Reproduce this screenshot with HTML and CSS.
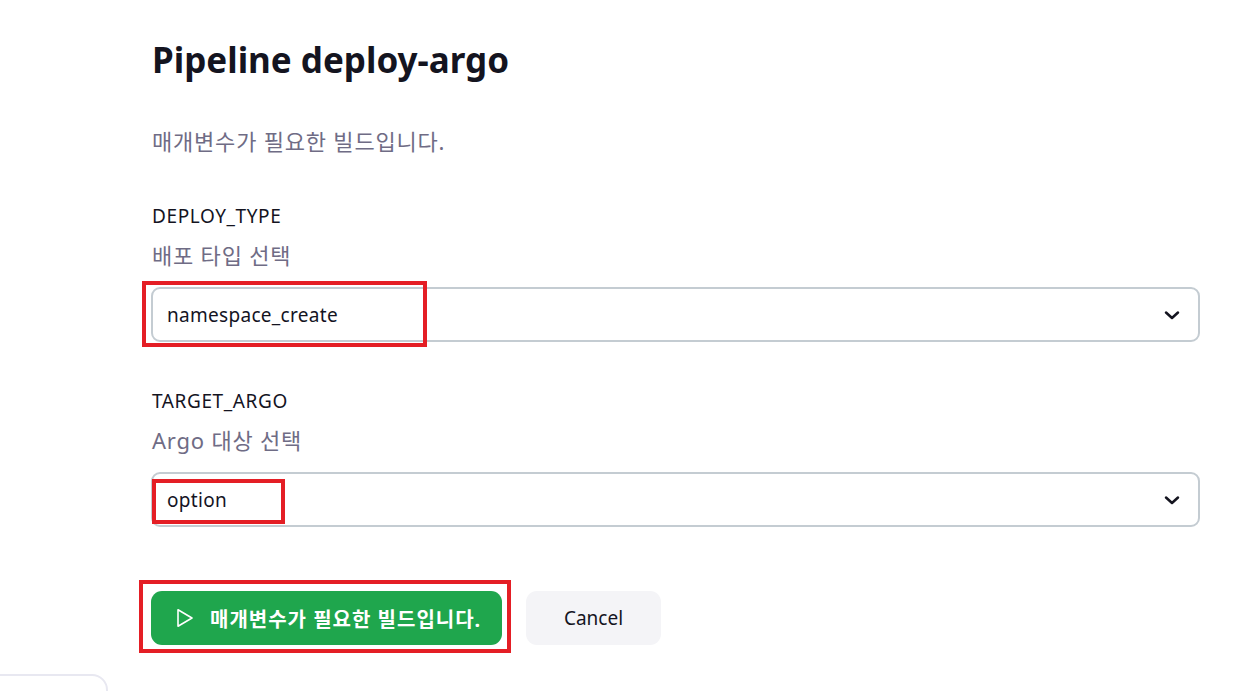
FILE: index.html
```html
<!DOCTYPE html>
<html lang="ko">
<head>
<meta charset="utf-8">
<title>Pipeline deploy-argo</title>
<link rel="stylesheet" href="styles.css">
</head>
<body>
<main class="main">
  <h1 class="title">Pipeline deploy-argo</h1>
  <p class="subtitle">매개변수가 필요한 빌드입니다.</p>

  <div class="param param-first">
    <div class="param-name">DEPLOY_TYPE</div>
    <div class="param-desc">배포 타입 선택</div>
    <div class="select-wrap">
      <div class="select">
        <span class="select-value">namespace_create</span>
        <svg class="chevron" width="20" height="20" viewBox="0 0 20 20"><path d="M4 7.5 L10 13 L16 7.5" fill="none" stroke="#14141f" stroke-width="2.5" stroke-linecap="round" stroke-linejoin="round"/></svg>
      </div>
      <div class="mark mark-1"></div>
    </div>
  </div>

  <div class="param">
    <div class="param-name">TARGET_ARGO</div>
    <div class="param-desc">Argo 대상 선택</div>
    <div class="select-wrap">
      <div class="select">
        <span class="select-value">option</span>
        <svg class="chevron" width="20" height="20" viewBox="0 0 20 20"><path d="M4 7.5 L10 13 L16 7.5" fill="none" stroke="#14141f" stroke-width="2.5" stroke-linecap="round" stroke-linejoin="round"/></svg>
      </div>
      <div class="mark mark-2"></div>
    </div>
  </div>

  <div class="actions">
    <div class="build-wrap">
      <button class="btn btn-build" type="button">
        <svg class="play" width="18" height="20" viewBox="0 0 18 20"><path d="M2 1.8 L16 10 L2 18.2 Z" fill="none" stroke="#ffffff" stroke-width="1.6" stroke-linejoin="round"/></svg>
        <span>매개변수가 필요한 빌드입니다.</span>
      </button>
      <div class="mark mark-3"></div>
    </div>
    <button class="btn btn-cancel" type="button">Cancel</button>
  </div>
</main>
<div class="side-card"></div>
</body>
</html>
```

FILE: styles.css
```css
html, body {
  margin: 0;
  padding: 0;
  background: #ffffff;
  overflow: hidden;
}

body {
  font-family: "Noto Sans", "Noto Sans CJK KR", sans-serif;
  color: #14141f;
  height: 691px;
}

.main {
  width: 1049px;
  padding: 38px 0 0 151px;
}

.title {
  margin: 0;
  font-size: 35px;
  line-height: 44px;
  font-weight: 700;
  padding-left: 1px;
}

.subtitle {
  margin: 45px 0 0;
  font-size: 22px;
  line-height: 28px;
  letter-spacing: 0.8px;
  color: #6f6c85;
  padding-left: 1px;
}

.param {
  margin-top: 47px;
}

.param-first {
  margin-top: 49px;
}

.param-name {
  font-size: 19px;
  line-height: 24px;
  letter-spacing: 0.6px;
  padding-left: 1px;
}

.param-desc {
  margin-top: 13px;
  font-size: 22px;
  line-height: 28px;
  letter-spacing: 0.8px;
  color: #6f6c85;
  padding-left: 1px;
}

.select-wrap {
  position: relative;
  margin-top: 18px;
}

.select {
  height: 55px;
  box-sizing: border-box;
  border: 2px solid #c4ccd2;
  border-radius: 9px;
  display: flex;
  align-items: center;
  justify-content: space-between;
  padding: 0 16px 0 14px;
  background: #ffffff;
}

.select-value {
  font-size: 19px;
  letter-spacing: 0.3px;
  color: #14141f;
}

.chevron {
  display: block;
}

.mark {
  position: absolute;
  border: 4px solid #e41e25;
  box-sizing: border-box;
  pointer-events: none;
}

.mark-1 {
  left: -9px;
  top: -6px;
  width: 285px;
  height: 66px;
}

.mark-2 {
  left: 1px;
  top: 7px;
  width: 133px;
  height: 45px;
}

.mark-3 {
  left: -12px;
  top: -11px;
  width: 372px;
  height: 73px;
}

.actions {
  margin-top: 64px;
  display: flex;
  align-items: center;
  gap: 24px;
}

.build-wrap {
  position: relative;
}

.btn {
  height: 54px;
  border: none;
  border-radius: 11px;
  font-family: "Noto Sans", "Noto Sans CJK KR", sans-serif;
  cursor: pointer;
  display: flex;
  align-items: center;
}

.btn-build {
  width: 351px;
  background: #1fa64d;
  color: #ffffff;
  font-size: 20px;
  letter-spacing: 1px;
  font-weight: 700;
  padding: 0 0 0 25px;
  gap: 16px;
}

.play {
  display: block;
}

.btn-cancel {
  width: 135px;
  justify-content: center;
  background: #f4f4f7;
  color: #14141f;
  font-size: 19px;
}

.side-card {
  position: absolute;
  left: -20px;
  top: 674px;
  width: 128px;
  height: 40px;
  border: 2px solid #e8e8f1;
  border-radius: 16px;
  box-sizing: border-box;
}
```
